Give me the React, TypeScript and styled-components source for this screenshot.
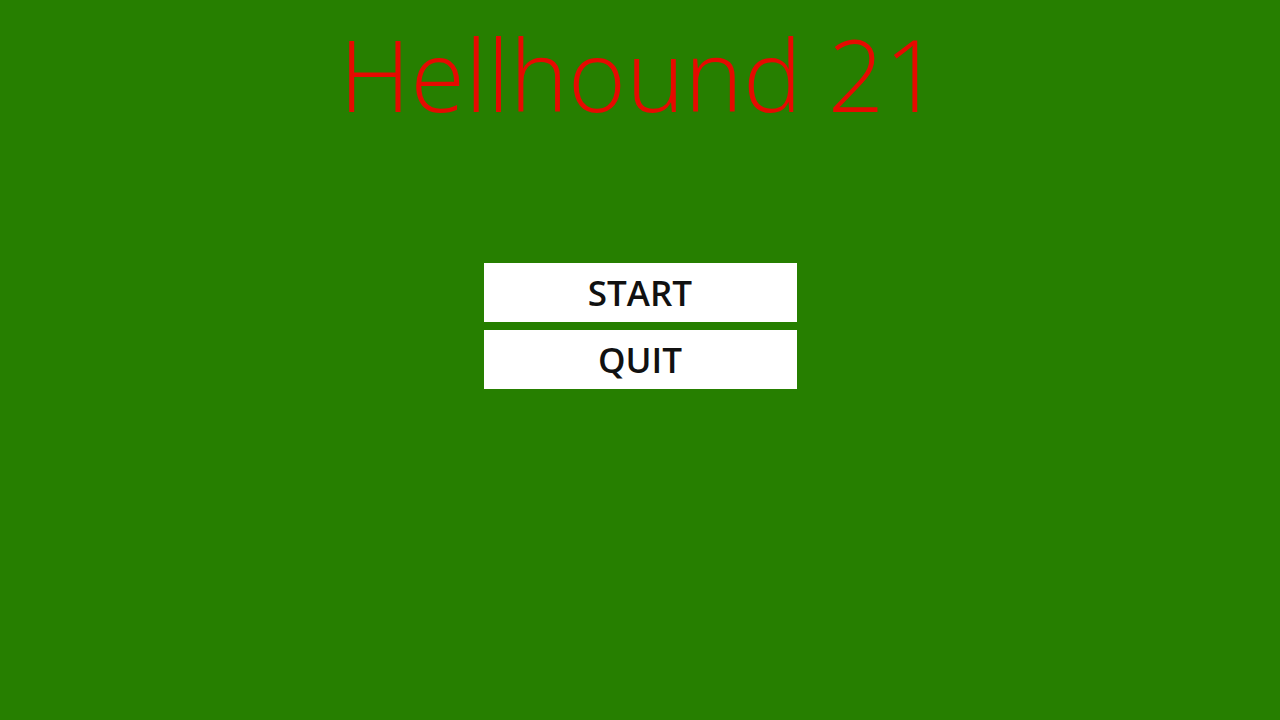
import styled, { createGlobalStyle } from "styled-components";

const GlobalStyle = createGlobalStyle`
  html, body {
    margin: 0;
    padding: 0;
    height: 100%;
    background: #267f00;
  }
  #root {
    min-height: 100vh;
  }
`;

const Screen = styled.main`
  min-height: 100vh;
  background: #267f00;
  display: flex;
  flex-direction: column;
  align-items: center;
  font-family: "Open Sans", "Liberation Sans", sans-serif;
`;

const Title = styled.h1`
  margin: 24px 0 0;
  font-size: 99px;
  line-height: 100px;
  font-weight: 300;
  color: #e60a00;
`;

const Menu = styled.nav`
  margin-top: 139px;
  display: flex;
  flex-direction: column;
  gap: 8px;
`;

const MenuButton = styled.button`
  width: 313px;
  height: 59px;
  padding: 0;
  border: none;
  background: #ffffff;
  color: #111111;
  font-family: inherit;
  font-size: 35px;
  font-weight: 600;
  line-height: 59px;
  cursor: pointer;
`;

export default function App() {
  return (
    <>
      <GlobalStyle />
      <Screen>
        <Title>Hellhound 21</Title>
        <Menu>
          <MenuButton>START</MenuButton>
          <MenuButton>QUIT</MenuButton>
        </Menu>
      </Screen>
    </>
  );
}
